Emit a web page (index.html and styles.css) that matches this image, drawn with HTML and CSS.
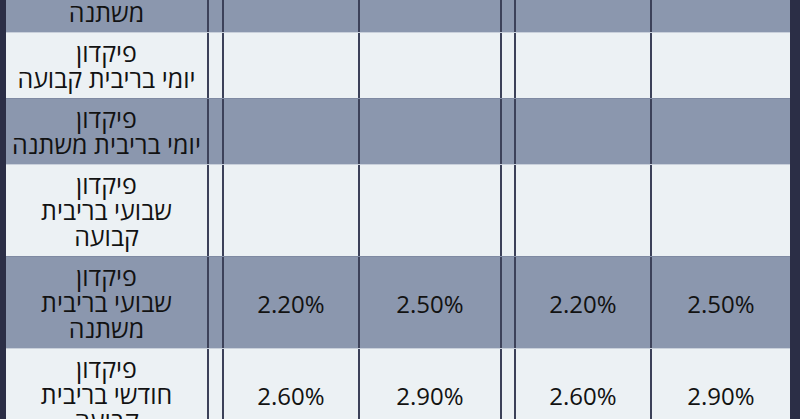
FILE: index.html
```html
<!DOCTYPE html>
<html lang="he">
<head>
<meta charset="utf-8">
<title>ריביות פיקדונות</title>
<link rel="stylesheet" href="styles.css">
</head>
<body>
<div class="frame">
  <div class="rates">
    <div class="row dark">
      <div class="label">פיקדון<br>לילה בריבית<br>משתנה</div>
      <div class="gap"></div><div class="val"></div><div class="val"></div>
      <div class="gap"></div><div class="val"></div><div class="val"></div>
    </div>
    <div class="row light">
      <div class="label">פיקדון<br>יומי בריבית קבועה</div>
      <div class="gap"></div><div class="val"></div><div class="val"></div>
      <div class="gap"></div><div class="val"></div><div class="val"></div>
    </div>
    <div class="row dark">
      <div class="label">פיקדון<br>יומי בריבית משתנה</div>
      <div class="gap"></div><div class="val"></div><div class="val"></div>
      <div class="gap"></div><div class="val"></div><div class="val"></div>
    </div>
    <div class="row light">
      <div class="label">פיקדון<br>שבועי בריבית<br>קבועה</div>
      <div class="gap"></div><div class="val"></div><div class="val"></div>
      <div class="gap"></div><div class="val"></div><div class="val"></div>
    </div>
    <div class="row dark">
      <div class="label">פיקדון<br>שבועי בריבית<br>משתנה</div>
      <div class="gap"></div><div class="val">2.20%</div><div class="val">2.50%</div>
      <div class="gap"></div><div class="val">2.20%</div><div class="val">2.50%</div>
    </div>
    <div class="row light">
      <div class="label">פיקדון<br>חודשי בריבית<br>קבועה</div>
      <div class="gap"></div><div class="val">2.60%</div><div class="val">2.90%</div>
      <div class="gap"></div><div class="val">2.60%</div><div class="val">2.90%</div>
    </div>
  </div>
</div>
</body>
</html>
```

FILE: styles.css
```css
html, body {
  margin: 0;
  padding: 0;
}
body {
  background: #2b2e46;
  overflow: hidden;
  height: 419px;
  font-family: "Open Sans", "DejaVu Sans", sans-serif;
  color: #121212;
}
.frame {
  padding: 0 10px 0 6px;
}
.rates {
  margin-top: -60px;
  display: flex;
  flex-direction: column;
}
.row {
  display: grid;
  grid-template-columns: 201px 15px 136px 142px 14px 136px 140px;
  border-top: 1px solid #7f8aa2;
}
.row.dark {
  background: #8b97ae;
}
.row.light {
  background: #ecf1f4;
  border-top-color: #c9d0db;
}
.label {
  padding: 6px 2px 7px;
  font-size: 25px;
  font-weight: 500;
  line-height: 26px;
  text-align: center;
  direction: rtl;
}
.gap, .val {
  box-sizing: border-box;
  border-left: 2px solid #3c4159;
}
.val {
  display: flex;
  align-items: center;
  justify-content: center;
  font-size: 24px;
  font-weight: 500;
  padding-top: 1px;
}
```
